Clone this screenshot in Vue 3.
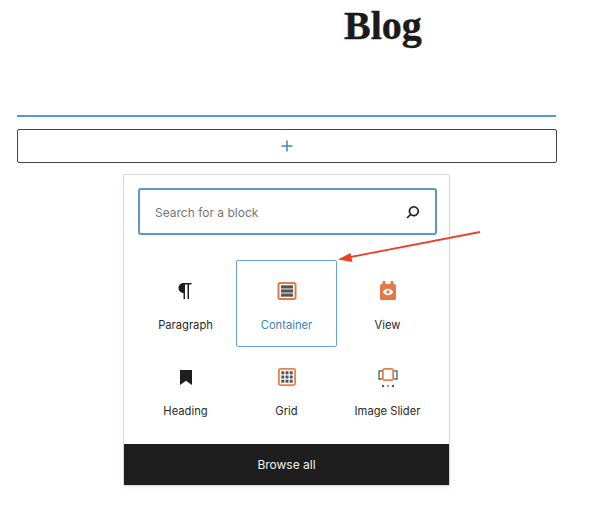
<script setup>
const blocks = [
  { name: 'Paragraph', icon: 'paragraph' },
  { name: 'Container', icon: 'container', active: true },
  { name: 'View', icon: 'view' },
  { name: 'Heading', icon: 'heading' },
  { name: 'Grid', icon: 'grid' },
  { name: 'Image Slider', icon: 'slider' }
]
</script>

<template>
  <div class="page">
    <h1 class="title">Blog</h1>
    <div class="rule"></div>
    <button class="appender" aria-label="Add block">
      <svg width="14" height="14" viewBox="0 0 14 14"><path d="M7 1.5v11M1.5 7h11" stroke="#3d85c0" stroke-width="1.5" fill="none" /></svg>
    </button>
    <div class="panel">
      <div class="body">
        <div class="search">
          <span class="placeholder">Search for a block</span>
          <svg width="20" height="20" viewBox="0 0 24 24" class="search-icon"><path d="M13 5c-3.3 0-6 2.7-6 6 0 1.4.5 2.7 1.3 3.7l-3.8 3.8 1.1 1.1 3.8-3.8c1 .8 2.3 1.3 3.7 1.3 3.3 0 6-2.7 6-6S16.3 5 13 5zm0 10.5c-2.5 0-4.5-2-4.5-4.500s2-4.500 4.500-4.500 4.500 2 4.500 4.500-2 4.500-4.500 4.500z" fill="#1e1e1e" stroke="#1e1e1e" stroke-width="0.5" /></svg>
        </div>
        <div class="grid">
          <div v-for="b in blocks" :key="b.name" class="tile" :class="{ active: b.active }">
            <svg class="icon" width="24" height="24" viewBox="0 0 24 24">
              <path v-if="b.icon === 'paragraph'" d="M9.5 14v6H11V5.5h2.5V20H15V5.5h2.5V4H9.5c-2.76 0-5 2.24-5 5s2.24 5 5 5z" fill="#1e1e1e" />
              <template v-else-if="b.icon === 'container'">
                <rect x="3.5" y="4" width="17" height="16" rx="1.5" fill="#fff" stroke="#e07b47" stroke-width="2" />
                <rect x="6" y="6.3" width="12" height="3.2" fill="#555" />
                <rect x="6" y="10.4" width="12" height="3.2" fill="#555" />
                <rect x="6" y="14.5" width="12" height="3.2" fill="#555" />
              </template>
              <template v-else-if="b.icon === 'view'">
                <rect x="6.5" y="2" width="3" height="4" rx="1" fill="#e07b47" />
                <rect x="14.5" y="2" width="3" height="4" rx="1" fill="#e07b47" />
                <rect x="4" y="5" width="16" height="16" rx="1.5" fill="#e07b47" />
                <path d="M6.8 13c1.4-2.2 3.2-3.2 5.2-3.200s3.800 1 5.200 3.200c-1.400 2.200-3.200 3.200-5.200 3.200s-3.800-1-5.200-3.200z" fill="#fff" />
                <circle cx="12" cy="13" r="1.7" fill="#e07b47" />
              </template>
              <path v-else-if="b.icon === 'heading'" d="M6 5h12v15l-6-4.2L6 20z" fill="#1e1e1e" />
              <template v-else-if="b.icon === 'grid'">
                <rect x="3.9" y="3.9" width="16.2" height="16.2" rx="1.5" fill="#fff" stroke="#e8804a" stroke-width="1.8" />
                <g fill="#555">
                  <rect x="6.3" y="6.3" width="3" height="3" /><rect x="10.5" y="6.3" width="3" height="3" /><rect x="14.7" y="6.3" width="3" height="3" />
                  <rect x="6.3" y="10.5" width="3" height="3" /><rect x="10.5" y="10.5" width="3" height="3" /><rect x="14.7" y="10.5" width="3" height="3" />
                  <rect x="6.3" y="14.7" width="3" height="3" /><rect x="10.5" y="14.7" width="3" height="3" /><rect x="14.7" y="14.7" width="3" height="3" />
                </g>
              </template>
              <template v-else>
                <path d="M6 6H3v8h3M18 6h3v8h-3" fill="none" stroke="#666" stroke-width="1.4" />
                <rect x="6.9" y="3.9" width="10.2" height="11.2" rx="1.5" fill="#fff" stroke="#e8804a" stroke-width="1.8" />
                <circle cx="7" cy="21" r="1.2" fill="#555" />
                <circle cx="12" cy="21" r="1.2" fill="#e8804a" />
                <circle cx="17" cy="21" r="1.2" fill="#555" />
              </template>
            </svg>
            <span class="label">{{ b.name }}</span>
          </div>
        </div>
      </div>
      <div class="browse">Browse all</div>
    </div>
    <svg class="arrow" width="150" height="40" viewBox="0 0 150 40">
      <path d="M142 2L10 27.5" stroke="#e8432a" stroke-width="1.8" fill="none" />
      <path d="M0 29.5l12.5-6.500 2 9z" fill="#e8432a" />
    </svg>
  </div>
</template>

<style scoped>
.page {
  position: relative;
  width: 602px;
  height: 528px;
  background: #fff;
  overflow: hidden;
  font-family: Inter, "Liberation Sans", sans-serif;
  box-sizing: border-box;
  padding: 0 0 0 17px;
}
.title {
  margin: 0 0 0 327px;
  font-family: "Liberation Serif", serif;
  font-weight: 700;
  font-size: 40px;
  line-height: 52px;
  color: #1b1b1b;
  height: 115px;
  -webkit-text-stroke: 0.4px #1b1b1b;
}
.rule {
  width: 539px;
  height: 2px;
  background: #5a97c9;
}
.appender {
  display: flex;
  align-items: center;
  justify-content: center;
  width: 540px;
  height: 34px;
  margin-top: 12px;
  padding: 0;
  background: #fff;
  border: 1px solid #444;
  border-radius: 2px;
  box-sizing: border-box;
}
.panel {
  width: 327px;
  margin: 11px 0 0 106px;
  border: 1px solid #d9d9d9;
  border-radius: 2px;
  box-sizing: border-box;
  box-shadow: 0 2px 6px rgba(0, 0, 0, 0.05);
}
.body {
  padding: 13px 12px 12px 11px;
}
.search {
  display: flex;
  align-items: center;
  justify-content: space-between;
  height: 47px;
  margin: 0 0 25px 3px;
  padding: 1px 12px 0 15px;
  border: 2px solid #5b98c9;
  border-radius: 3px;
  box-sizing: border-box;
}
.placeholder {
  font-size: 12px;
  color: #757575;
}
.grid {
  display: grid;
  grid-template-columns: repeat(3, 101px);
  grid-auto-rows: 86px;
}
.tile {
  display: flex;
  flex-direction: column;
  align-items: center;
  padding-top: 18px;
  border: 1px solid transparent;
  border-radius: 2px;
  box-sizing: border-box;
}
.tile.active {
  border-color: #6ba3d1;
  height: 87px;
}
.tile.active .label {
  color: #3d82bd;
}
.icon {
  display: block;
}
.label {
  margin-top: 14px;
  font-size: 11.2px;
  line-height: 16px;
  color: #2a2a2a;
}
.browse {
  display: flex;
  align-items: center;
  justify-content: center;
  height: 41px;
  background: #1e1e1e;
  color: #f2f2f2;
  font-size: 12px;
}
.arrow {
  position: absolute;
  left: 338px;
  top: 230px;
}
</style>
